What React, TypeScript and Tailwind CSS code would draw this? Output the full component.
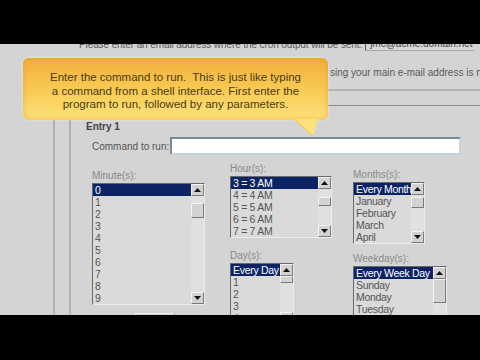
import React from "react";

function Arrow({ down }: { down?: boolean }) {
  return (
    <svg width="7" height="4" viewBox="0 0 7 4" className={down ? "rotate-180" : ""}>
      <path d="M3.5 0 L7 4 L0 4 Z" fill="#111" />
    </svg>
  );
}

function Btn({ down }: { down?: boolean }) {
  return (
    <div className="flex h-[12px] shrink-0 items-center justify-center border border-t-[#f4f4f4] border-l-[#f4f4f4] border-r-[#7a7a7a] border-b-[#7a7a7a] bg-[#d2d2d2]">
      <Arrow down={down} />
    </div>
  );
}

function ListBox({
  items,
  rows,
  w,
  h,
  thumb,
}: {
  items: string[];
  rows: number;
  w: string;
  h: string;
  thumb: string;
}) {
  return (
    <div
      className={`flex border border-t-[#6a6a6a] border-l-[#6a6a6a] border-r-[#ececec] border-b-[#ececec] bg-[#dadada] ${w} ${h}`}
    >
      <div className="flex-1 overflow-hidden">
        {items.slice(0, rows).map((t, i) => (
          <div
            key={t}
            className={
              i === 0
                ? "h-[12px] whitespace-nowrap bg-[#0c2466] pl-[2px] text-[10.5px] leading-[12px] tracking-[-0.3px] text-white"
                : "h-[12px] whitespace-nowrap pl-[2px] text-[10.5px] leading-[12px] tracking-[-0.3px] text-[#555]"
            }
          >
            {t}
          </div>
        ))}
      </div>
      <div className="flex w-[13px] shrink-0 flex-col bg-[#e0e0e0]">
        <Btn />
        <div className="flex-1">
          <div
            className={`border border-t-[#f4f4f4] border-l-[#f4f4f4] border-r-[#7a7a7a] border-b-[#7a7a7a] bg-[#d2d2d2] ${thumb}`}
          />
        </div>
        <Btn down />
      </div>
    </div>
  );
}

export default function App() {
  const minutes = ["0", "1", "2", "3", "4", "5", "6", "7", "8", "9"];
  const hours = ["3 = 3 AM", "4 = 4 AM", "5 = 5 AM", "6 = 6 AM", "7 = 7 AM"];
  const days = ["Every Day", "1", "2", "3", "4"];
  const months = ["Every Month", "January", "February", "March", "April"];
  const weekdays = ["Every Week Day", "Sunday", "Monday", "Tuesday", "Wednesday"];

  return (
    <div className="flex h-[360px] w-[480px] flex-col overflow-hidden bg-black font-['Liberation_Sans',Arial,sans-serif]">
      <div className="h-[44px] shrink-0 bg-black" />
      <div className="relative h-[271px] shrink-0 overflow-hidden bg-[#d4d4d4] text-[10px] text-[#5a5a5a]">
        {/* email row */}
        <div className="-mt-[5px] flex h-[12px] items-end whitespace-nowrap pl-[79px] leading-[12px]">
          <span className="tracking-[-0.1px]">Please enter an email address where the cron output will be sent:</span>
          <span className="ml-[3px] flex h-[22px] w-[109px] shrink-0 items-end overflow-hidden border-b border-l border-b-[#a8a8a8] border-l-[#555] bg-[#d8d8d8] pl-[4px] text-[#444]">
            jmc@acme.domain.net
          </span>
        </div>
        <div className="mt-[16px] whitespace-nowrap pl-[330px] leading-[12px]">
          sing your main e-mail address is not required
        </div>
        <div className="ml-[53px] mt-[10px] h-[2px] bg-[#b3b3b3]" />
        <div className="ml-[53px] mt-[14px] h-[220px] border-l-2 border-t border-l-[#b0b0b0] border-t-[#8e8e8e]">
          <div className="ml-[14px] mt-[4px] h-[210px] border-l-2 border-l-[#b0b0b0] pt-[11px]">
            <div className="pl-[15px] font-bold leading-[12px] text-[#444]">Entry 1</div>
            <div className="mt-[4px] flex h-[18px] items-center pl-[21px]">
              <div className="w-[78px] text-[#555]">Command to run:</div>
              <div className="h-[18px] w-[291px] border-2 border-t-[#7b8896] border-l-[#7b8896] border-r-[#c9d1da] border-b-[#c9d1da] bg-white" />
            </div>
            <div className="flex items-start pl-[21px]">
              <div className="mt-[15px] w-[113px]">
                <div className="h-[12px] leading-[12px] text-[#8a8a8a]">Minute(s):</div>
                <div className="mt-[1px]">
                  <ListBox items={minutes} rows={10} w="w-[113px]" h="h-[122px]" thumb="mt-[7px] h-[15px]" />
                </div>
                <div className="ml-[43px] mt-[8px] h-[20px] w-[40px] border border-t-[#f2f2f2] border-l-[#f2f2f2] border-r-[#888] border-b-[#888] bg-[#d0d0d0]" />
              </div>
              <div className="ml-[25px] mt-[8px] w-[102px]">
                <div className="h-[12px] leading-[12px] text-[#8a8a8a]">Hour(s):</div>
                <div className="mt-[1px]">
                  <ListBox items={hours} rows={5} w="w-[102px]" h="h-[62px]" thumb="mt-[8px] h-[9px]" />
                </div>
                <div className="mt-[12px] h-[12px] leading-[12px] text-[#8a8a8a]">Day(s):</div>
                <div className="mt-[1px]">
                  <ListBox items={days} rows={5} w="w-[64px]" h="h-[62px]" thumb="mt-[0px] h-[7px]" />
                </div>
              </div>
              <div className="ml-[21px] mt-[14px] w-[94px]">
                <div className="h-[12px] leading-[12px] text-[#8a8a8a]">Months(s):</div>
                <div className="mt-[1px]">
                  <ListBox items={months} rows={5} w="w-[72px]" h="h-[62px]" thumb="mt-[2px] h-[11px]" />
                </div>
                <div className="mt-[9px] h-[12px] leading-[12px] text-[#8a8a8a]">Weekday(s):</div>
                <div className="mt-[1px]">
                  <ListBox items={weekdays} rows={5} w="w-[94px]" h="h-[62px]" thumb="mt-[0px] h-[24px]" />
                </div>
              </div>
            </div>
          </div>
        </div>

        {/* callout */}
        <div className="absolute left-[23px] top-[14px] h-[62px] w-[305px] rounded-[6px] bg-linear-to-b from-[#f3ae3c] via-[#f8ca52] to-[#fde27a] pt-[13px] text-center text-[11.5px] leading-[13.5px] text-[#4a3a16] shadow-[inset_0_0_6px_rgba(225,135,20,0.45),0_0_3px_rgba(255,255,255,0.5)]">
          Enter the command to run.&nbsp; This is just like typing
          <br />
          a command from a shell interface. First enter the
          <br />
          program to run, followed by any parameters.
          <svg
            width="26"
            height="18"
            viewBox="0 0 26 18"
            className="absolute left-[270px] top-[61px]"
          >
            <polygon points="0,0 25,0 20,17" fill="#fce27a" />
            <polyline points="1,0 20,17" stroke="#f2bd4c" strokeWidth="1" fill="none" />
          </svg>
        </div>
      </div>
      <div className="flex-1 bg-black" />
    </div>
  );
}
